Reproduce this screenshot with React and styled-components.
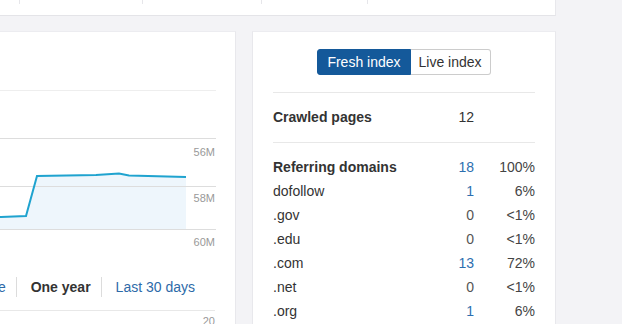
import React from "react";
import styled, { createGlobalStyle } from "styled-components";

const GlobalStyle = createGlobalStyle`
  html, body {
    margin: 0;
    padding: 0;
    background: #f3f3f6;
    font-family: "Liberation Sans", Arial, sans-serif;
    color: #333;
    overflow: hidden;
  }
`;

const Page = styled.div`
  width: 756px;
  margin-left: -200px;
  display: flex;
  flex-direction: column;
  gap: 15px;
`;

const TopCard = styled.div`
  background: #fff;
  border-bottom: 1px solid #e4e4e8;
  border-right: 1px solid #e8e8ec;
  height: 15px;
  display: flex;
`;

const TopCell = styled.div`
  width: ${(p) => p.$w}px;
  height: 4px;
  border-right: 1px solid #e6e6ea;
`;

const Row = styled.div`
  display: flex;
  gap: 16px;
  align-items: flex-start;
`;

const Card = styled.div`
  background: #fff;
  border: 1px solid #e8e8ec;
  border-top-color: #ececf0;
  box-sizing: border-box;
  width: ${(p) => p.$w}px;
  height: 300px;
`;

const ChartCard = styled(Card)`
  padding: 47px 20px 0 20px;
`;

const Periods = styled.div`
  display: flex;
  justify-content: flex-end;
  align-items: center;
  height: 20px;
  margin-top: 23px;
  padding-right: 20px;
  font-size: 14px;
`;

const Period = styled.span`
  color: ${(p) => (p.$active ? "#333" : "#2d6aa8")};
  font-weight: ${(p) => (p.$active ? 700 : 400)};
  padding: 0 10px 0 14px;
  line-height: 20px;
  & + & {
    border-left: 1px solid #dcdcdc;
  }
  &:last-child {
    padding-right: 0;
  }
`;

const Divider = styled.div`
  height: 1px;
  background: #e8e8e8;
  margin-top: ${(p) => p.$mt || 0}px;
`;

const NextLabel = styled.div`
  text-align: right;
  font-size: 11px;
  color: #999;
  margin-top: 4px;
`;

const IndexCard = styled(Card)`
  padding: 17px 20px 0 20px;
`;

const Toggle = styled.div`
  display: flex;
  justify-content: center;
  margin-bottom: 17px;
`;

const ToggleBtn = styled.button`
  font-family: "Liberation Sans", Arial, sans-serif;
  font-size: 14px;
  height: 26px;
  padding: 0 ${(p) => (p.$active ? 9 : 8)}px;
  border: 1px solid ${(p) => (p.$active ? "#14599a" : "#ccc")};
  background: ${(p) => (p.$active ? "#14599a" : "#fff")};
  color: ${(p) => (p.$active ? "#fff" : "#333")};
  border-radius: ${(p) => (p.$active ? "3px 0 0 3px" : "0 3px 3px 0")};
  ${(p) => (p.$active ? "" : "border-left: none;")}
  cursor: pointer;
`;

const Table = styled.div`
  display: grid;
  grid-template-columns: 1fr 42px 61px;
  font-size: 14px;
  border-top: 1px solid #e8e8e8;
`;

const Cell = styled.div`
  height: ${(p) => p.$h || 24}px;
  line-height: ${(p) => p.$h || 24}px;
  text-align: ${(p) => (p.$right ? "right" : "left")};
  font-weight: ${(p) => (p.$bold ? 700 : 400)};
  color: ${(p) => p.$color || "#333"};
`;

const Section = styled.div`
  grid-column: 1 / -1;
  border-top: 1px solid #e8e8e8;
  height: 12px;
`;

const rows = [
  ["Referring domains", "18", "100%", true],
  ["dofollow", "1", "6%"],
  [".gov", "0", "<1%"],
  [".edu", "0", "<1%"],
  [".com", "13", "72%"],
  [".net", "0", "<1%"],
  [".org", "1", "6%"],
];

function Chart() {
  const pts = [
    [0, 139],
    [180, 138],
    [205, 137],
    [216, 97],
    [275, 96],
    [298, 94.5],
    [308, 96.5],
    [365, 98],
  ];
  const line = pts.map((p) => p.join(",")).join(" ");
  const area = `0,150 ${line} 365,150`;
  return (
    <svg width="395" height="175" viewBox="0 0 395 175" style={{ display: "block" }}>
      <polygon points={area} fill="#eef6fc" />
      <line x1="0" x2="395" y1="11.5" y2="11.5" stroke="#eeeeee" />
      <line x1="0" x2="395" y1="59.5" y2="59.5" stroke="#dddddd" />
      <line x1="0" x2="395" y1="107.5" y2="107.5" stroke="#dddddd" />
      <line x1="0" x2="395" y1="150.5" y2="150.5" stroke="#dddddd" />
      <polyline points={line} fill="none" stroke="#1fa3cf" strokeWidth="2" />
      <g fontFamily="Liberation Sans, Arial, sans-serif" fontSize="11" fill="#999" textAnchor="end">
        <text x="394" y="77">56M</text>
        <text x="394" y="123">58M</text>
        <text x="394" y="167">60M</text>
      </g>
    </svg>
  );
}

export default function App() {
  return (
    <>
      <GlobalStyle />
      <Page>
        <TopCard>
          <TopCell $w={219} />
          <TopCell $w={122} />
          <TopCell $w={118} />
          <TopCell $w={105} />
        </TopCard>
        <Row>
          <ChartCard $w={436}>
            <Chart />
            <Periods>
              <Period>All time</Period>
              <Period $active>One year</Period>
              <Period>Last 30 days</Period>
            </Periods>
            <Divider $mt={13} />
            <NextLabel>20</NextLabel>
          </ChartCard>
          <IndexCard $w={305}>
            <Toggle>
              <ToggleBtn $active>Fresh index</ToggleBtn>
              <ToggleBtn>Live index</ToggleBtn>
            </Toggle>
            <Table>
              <Cell $h={49} $bold>Crawled pages</Cell>
              <Cell $h={49} $right>12</Cell>
              <Cell $h={49} />
              <Section />
              {rows.map(([label, n, pct, bold]) => (
                <React.Fragment key={label}>
                  <Cell $bold={bold}>{label}</Cell>
                  <Cell $right $color={n === "0" ? "#555" : "#2d6fb0"}>{n}</Cell>
                  <Cell $right $color="#444">{pct}</Cell>
                </React.Fragment>
              ))}
            </Table>
          </IndexCard>
        </Row>
      </Page>
    </>
  );
}
